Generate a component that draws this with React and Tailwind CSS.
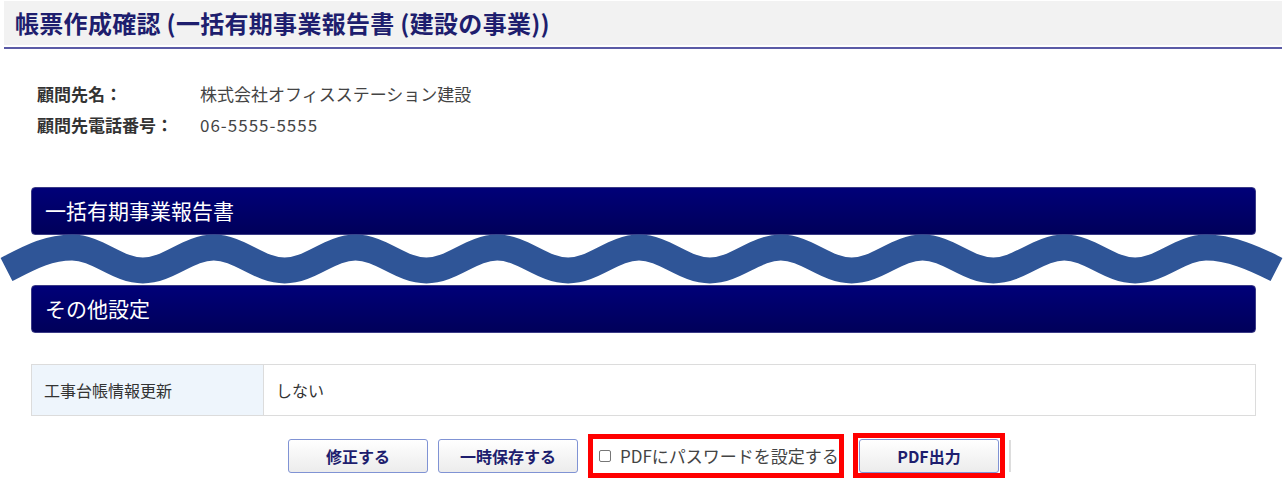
import React from "react";

// wave drawn between the two section bars (PowerPoint-style cut mark)
function wavePath() {
  const crest = 247.5;
  const trough = 270.5;
  const first = 72;
  const half = 70.875;
  const L = half * 0.363;
  let d = `M 6.5 269.5 C 30 257.5, ${first - 24} ${crest}, ${first} ${crest}`;
  let x = first;
  for (let i = 0; i < 16; i++) {
    const up = i % 2 === 1;
    const y0 = up ? trough : crest;
    const y1 = up ? crest : trough;
    d += ` C ${x + L} ${y0}, ${x + half - L} ${y1}, ${x + half} ${y1}`;
    x += half;
  }
  d += ` C ${x + 24} ${crest}, ${x + 48} 258, 1276.5 269.5`;
  return d;
}

function NavyBar({ children }) {
  return (
    <div className="h-[48px] rounded-[4px] border border-[#3b3b86] bg-gradient-to-b from-[#000078] to-[#00005a] flex items-center pl-[13px] text-white text-[21px]">
      {children}
    </div>
  );
}

function Button({ children }) {
  return (
    <button className="h-[34px] w-[140px] rounded-[3px] border border-[#8093d4] bg-gradient-to-b from-white to-[#ececec] text-[16px] font-bold text-[#1e1e6e]">
      {children}
    </button>
  );
}

export default function App() {
  return (
    <div
      className="w-[1283px] h-[496px] bg-white overflow-hidden"
      style={{ fontFamily: '"Noto Sans CJK JP", "Noto Sans", sans-serif' }}
    >
      {/* page title */}
      <div className="pl-[4px] pr-[1px] pt-[1px]">
        <div className="h-[44px] bg-[#f2f2f2] flex items-center pl-[11px]">
          <h1 className="text-[24px] font-bold text-[#1e1e6e] leading-none tracking-[0.3px]">
            帳票作成確認 (一括有期事業報告書 (建設の事業))
          </h1>
        </div>
        <div className="mt-[2px] h-[2px] bg-[#5b5ba6]" />
      </div>

      {/* client info */}
      <div className="mt-[29px] pl-[37px] text-[17px]">
        <div className="flex h-[31px] items-center">
          <span className="w-[163px] font-bold text-[#333]">顧問先名：</span>
          <span className="text-[#444]">株式会社オフィスステーション建設</span>
        </div>
        <div className="flex h-[31px] items-center">
          <span className="w-[163px] font-bold text-[#333]">顧問先電話番号：</span>
          <span className="text-[#444] tracking-[1px]">06-5555-5555</span>
        </div>
      </div>

      <div className="mt-[47px] pl-[31px] pr-[27px]">
        <NavyBar>一括有期事業報告書</NavyBar>
      </div>

      <svg
        className="block w-full h-[50px] overflow-visible"
        viewBox="0 235 1283 50"
        preserveAspectRatio="none"
      >
        <path d={wavePath()} fill="none" stroke="#2f5597" strokeWidth="26" />
      </svg>

      <div className="pl-[31px] pr-[27px]">
        <NavyBar>その他設定</NavyBar>

        <div className="mt-[31px] flex h-[52px] border border-[#dcdcdc] text-[16px]">
          <div className="w-[232px] bg-[#eef5fc] border-r border-[#dcdcdc] flex items-center pl-[12px] text-[#333]">
            工事台帳情報更新
          </div>
          <div className="flex items-center pl-[12px] text-[#333]">しない</div>
        </div>
      </div>

      {/* actions */}
      <div className="mt-[17px] flex items-center pl-[288px]">
        <Button>修正する</Button>
        <div className="ml-[10px]">
          <Button>一時保存する</Button>
        </div>
        <div className="ml-[10px] h-[44px] w-[256px] border-[5px] border-[#ff0000] flex items-center pl-[6px]">
          <span className="w-[12px] h-[12px] rounded-[2px] border border-[#767676] bg-white" />
          <span className="ml-[9px] text-[17px] text-[#444] whitespace-nowrap">
            PDFにパスワードを設定する
          </span>
        </div>
        <div className="ml-[9px] h-[45px] w-[152px] border-[5px] border-[#ff0000] flex items-center pl-[1px]">
          <Button>PDF出力</Button>
        </div>
        <div className="ml-[4px] h-[32px] w-[2px] bg-[#dddddd]" />
      </div>
    </div>
  );
}
